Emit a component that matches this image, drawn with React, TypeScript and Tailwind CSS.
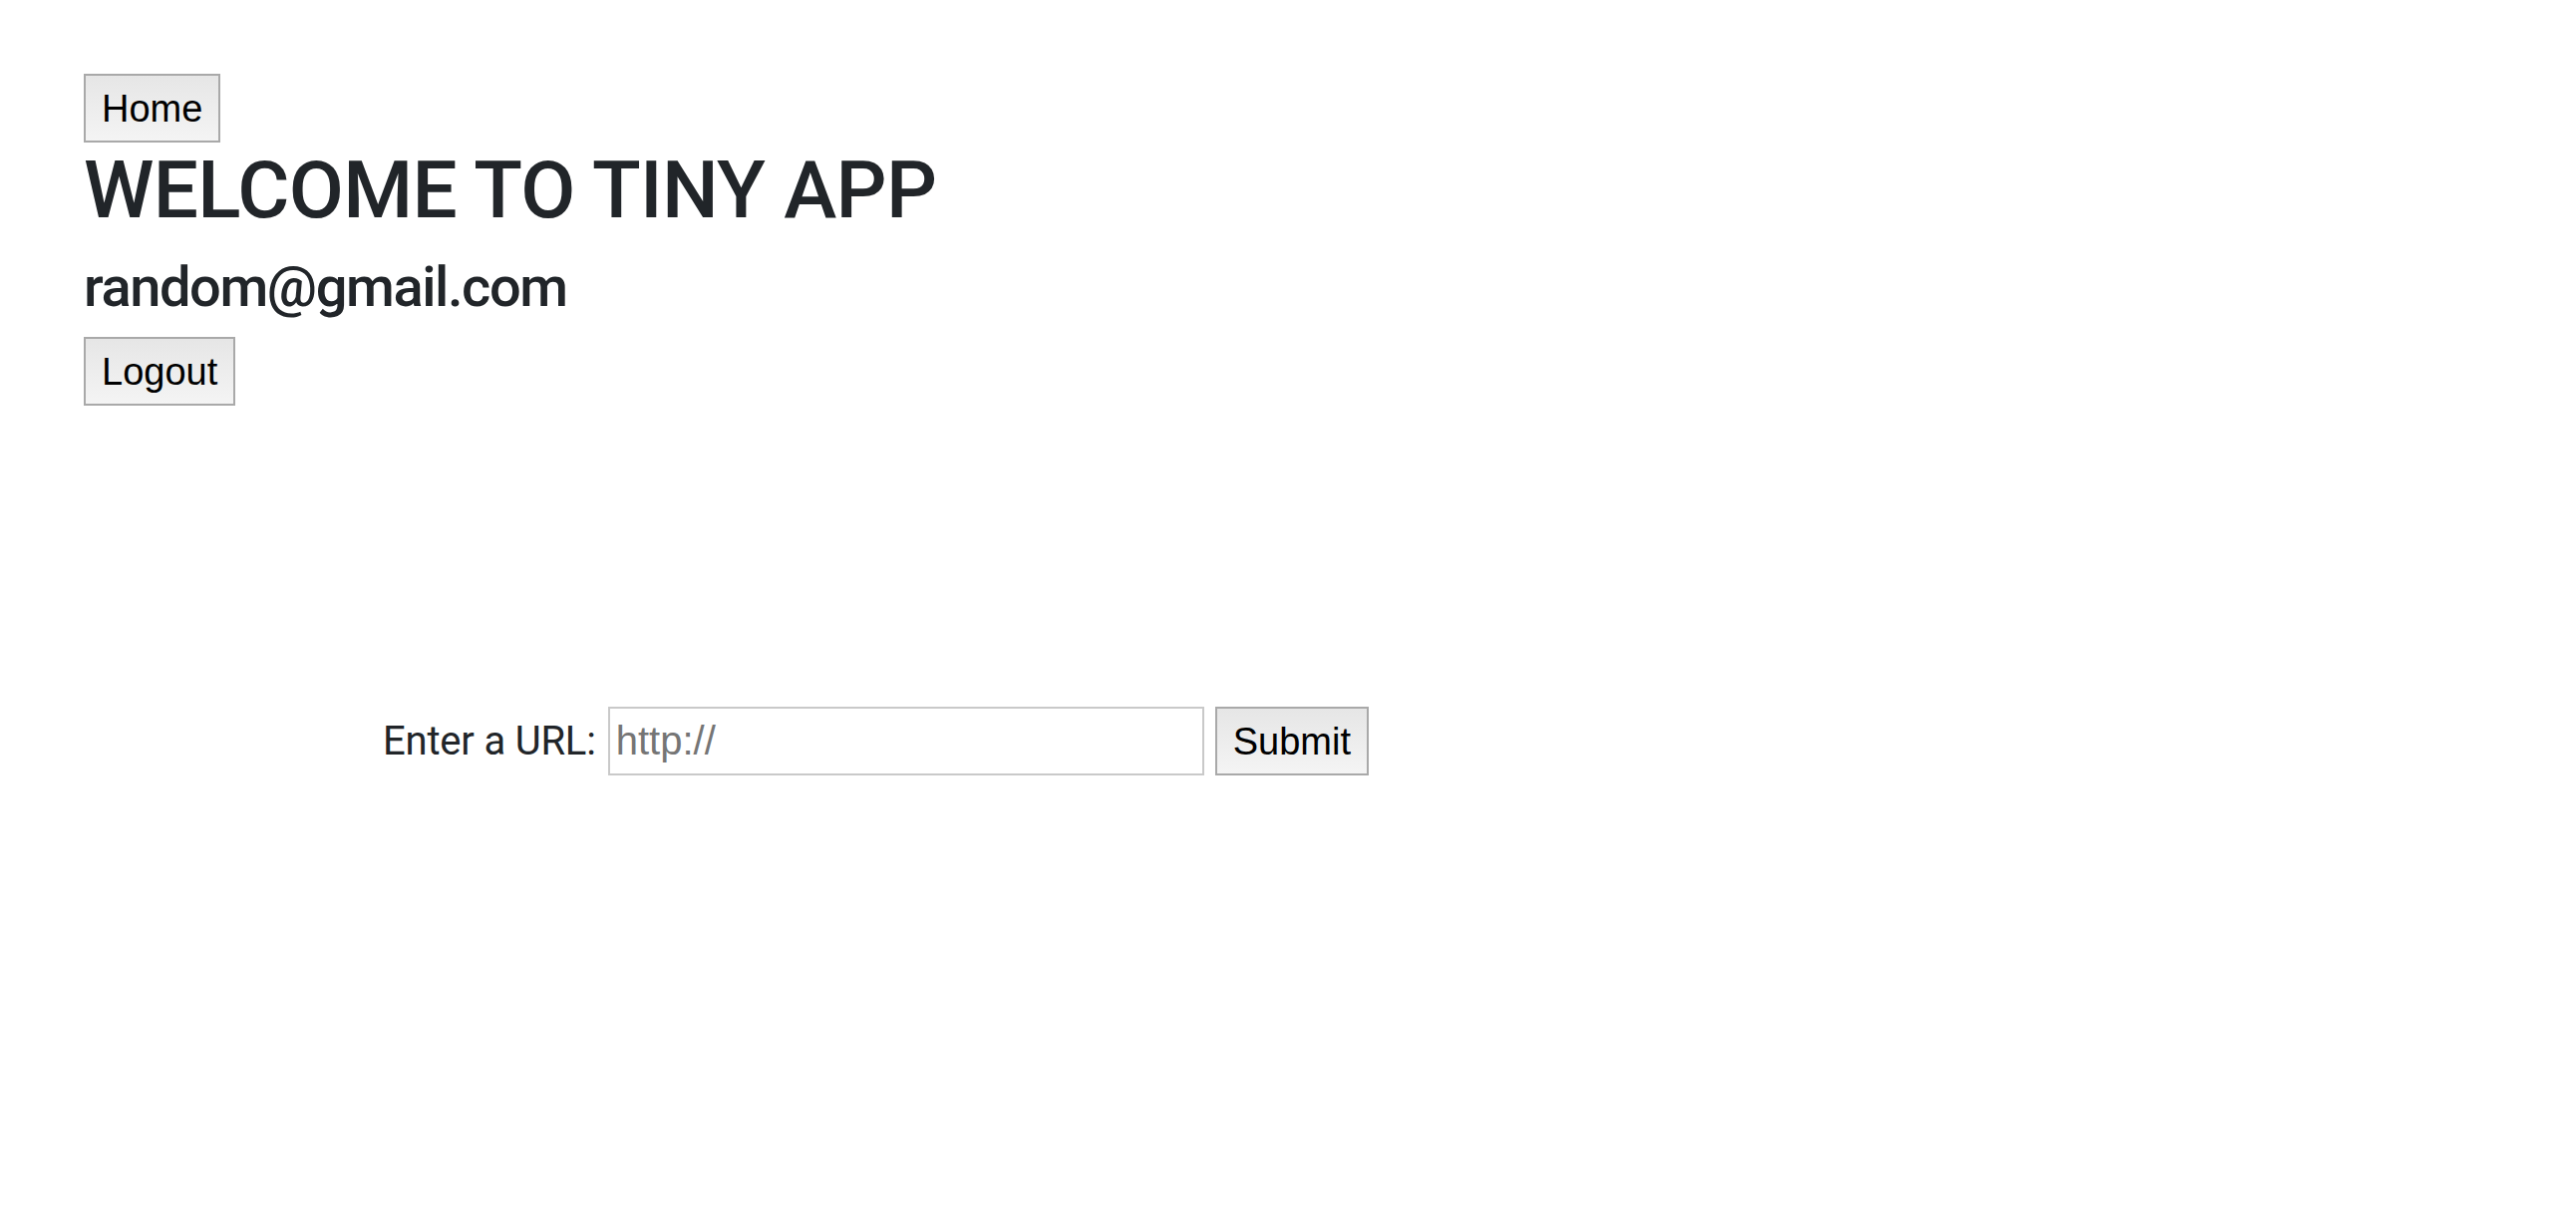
import React from 'react';

const btn =
  'h-[69px] px-[16px] border-2 border-[#a9a9a9] bg-gradient-to-b from-[#e6e6e6] to-[#f4f4f4] text-[38px] leading-none text-black font-["Liberation_Sans",Arial,sans-serif]';

export default function App() {
  return (
    <div className="min-h-screen bg-white pl-[84px] pt-[74px] text-[#212529] font-[Roboto,'Liberation_Sans',sans-serif]">
      {/* header */}
      <button className={btn}>Home</button>
      <h1 className="text-[80px] font-medium leading-[1.2] tracking-[-0.7px] mb-[16px]">WELCOME TO TINY APP</h1>
      <h3 className="text-[56px] font-medium leading-[1.2] tracking-[-1.4px] mb-[16px]">random@gmail.com</h3>
      <button className={btn}>Logout</button>

      {/* url form */}
      <form className="mt-[302px] ml-[300px] flex items-center" onSubmit={(e) => e.preventDefault()}>
        <label className="text-[40px] tracking-[-0.2px]">Enter a URL:</label>
        <input
          type="text"
          placeholder="http://"
          className="ml-[12px] w-[598px] h-[69px] border-2 border-[#c9c9c9] px-[6px] text-[40px] text-black placeholder:text-[#757575] outline-none font-['Liberation_Sans',Arial,sans-serif]"
        />
        <button type="submit" className={`${btn} ml-[11px]`}>
          Submit
        </button>
      </form>
    </div>
  );
}
